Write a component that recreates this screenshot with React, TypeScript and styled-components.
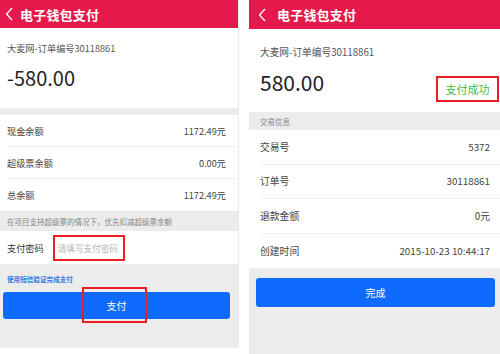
import React from "react";
import styled, { createGlobalStyle } from "styled-components";

const GlobalStyle = createGlobalStyle`
  html, body {
    margin: 0;
    padding: 0;
    background: #fff;
  }
  body {
    font-family: "Noto Sans CJK SC", "Noto Sans", sans-serif;
    color: #333;
  }
`;

const Page = styled.div`
  display: flex;
  gap: 10px;
  width: 500px;
  height: 354px;
  overflow: hidden;
`;

const Screen = styled.div<{ $width: number; $height: number }>`
  flex: none;
  display: flex;
  flex-direction: column;
  width: ${(p) => p.$width}px;
  height: ${(p) => p.$height}px;
  background: #ececec;
  box-sizing: border-box;
  border-right: 1px solid #e6ebf2;
`;

const Header = styled.div<{ $h: number; $pad: number }>`
  display: flex;
  align-items: center;
  gap: ${(p) => p.$pad + 2}px;
  height: ${(p) => p.$h}px;
  padding-left: ${(p) => p.$pad}px;
  background: #e5194b;
  color: #fff;
  flex: none;
`;

const Title = styled.span`
  font-size: 13px;
  font-weight: 700;
  letter-spacing: 0.2px;
`;

const Summary = styled.div<{ $top: number; $bottom: number; $pad: number }>`
  display: flex;
  flex-direction: column;
  padding: ${(p) => p.$top}px 1px ${(p) => p.$bottom}px ${(p) => p.$pad}px;
  background: #fff;
`;

const OrderNo = styled.div<{ $size: number }>`
  font-size: ${(p) => p.$size}px;
  line-height: 14px;
  color: #555;
`;

const AmountRow = styled.div<{ $gap: number }>`
  display: flex;
  align-items: flex-start;
  justify-content: space-between;
  margin-top: ${(p) => p.$gap}px;
`;

const Amount = styled.div<{ $size: number }>`
  font-size: ${(p) => p.$size}px;
  line-height: 26px;
  color: #222;
`;

const StatusBox = styled.div`
  display: flex;
  align-items: center;
  justify-content: center;
  margin-top: 7px;
  width: 63px;
  height: 26px;
  box-sizing: border-box;
  border: 2px solid #ee1c25;
  color: #3cba4c;
  font-size: 11px;
`;

const Band = styled.div<{ $h: number; $pad?: number }>`
  display: flex;
  align-items: center;
  height: ${(p) => p.$h}px;
  padding-left: ${(p) => p.$pad ?? 0}px;
  background: #ececec;
  color: #888;
  font-size: 7.5px;
  flex: none;
`;

const List = styled.div`
  background: #fff;
`;

const Row = styled.div<{ $h: number; $pad: number; $right: number; $size: number; $line?: boolean }>`
  position: relative;
  display: flex;
  align-items: center;
  justify-content: space-between;
  height: ${(p) => p.$h}px;
  padding: 0 ${(p) => p.$right}px 0 ${(p) => p.$pad}px;
  font-size: ${(p) => p.$size}px;
  color: #444;
  box-sizing: border-box;
  border-bottom: ${(p) => (p.$line ? "1px solid #f0f0f0" : "none")};
  margin-left: ${(p) => (p.$line ? p.$pad : 0)}px;
  padding-left: ${(p) => (p.$line ? 0 : p.$pad)}px;
`;

const PasswordRow = styled.div`
  display: flex;
  align-items: center;
  gap: 9px;
  height: 33px;
  padding-left: 7px;
  background: #fff;
  font-size: 9.2px;
  color: #333;
`;

const PasswordInput = styled.div`
  display: flex;
  align-items: center;
  width: 72px;
  height: 26px;
  padding-left: 3px;
  box-sizing: border-box;
  border: 2px solid #ee1c25;
  color: #b5b5b5;
  font-size: 8.6px;
`;

const Footer = styled.div<{ $top: number; $left: number; $right: number }>`
  display: flex;
  flex-direction: column;
  padding: ${(p) => p.$top}px ${(p) => p.$right}px 0 ${(p) => p.$left}px;
`;

const SmsLink = styled.div`
  margin-left: 4px;
  font-size: 6.6px;
  line-height: 10px;
  font-weight: 700;
  color: #2c7be5;
`;

const Button = styled.div<{ $h: number; $top: number }>`
  position: relative;
  display: flex;
  align-items: center;
  justify-content: center;
  height: ${(p) => p.$h}px;
  margin-top: ${(p) => p.$top}px;
  border-radius: 3px;
  background: #0f6bfe;
  color: #fff;
  font-size: 10px;
`;

const Highlight = styled.div`
  position: absolute;
  left: 79px;
  top: -5px;
  width: 65px;
  height: 36px;
  box-sizing: border-box;
  border: 2px solid #ee1c25;
`;

function Back() {
  return (
    <svg width="8" height="14" viewBox="0 0 8 14">
      <polyline points="7,1 1.5,7 7,13" fill="none" stroke="#fff" strokeWidth="1.3" />
    </svg>
  );
}

const balances = [
  ["现金余额", "1172.49元"],
  ["超级票余额", "0.00元"],
  ["总余额", "1172.49元"],
];

const trade = [
  ["交易号", "5372"],
  ["订单号", "30118861"],
  ["退款金额", "0元"],
  ["创建时间", "2015-10-23 10:44:17"],
];

export default function App() {
  return (
    <Page>
      <GlobalStyle />
      <Screen $width={239} $height={348}>
        <Header $h={28} $pad={5}>
          <Back />
          <Title>电子钱包支付</Title>
        </Header>
        <Summary $top={13} $bottom={17} $pad={7}>
          <OrderNo $size={9.2}>大麦网-订单编号30118861</OrderNo>
          <AmountRow $gap={10}>
            <Amount $size={20}>-580.00</Amount>
          </AmountRow>
        </Summary>
        <Band $h={7} />
        <List>
          {balances.map(([k, v], i) => (
            <Row key={k} $h={32} $pad={7} $right={12} $size={9.2} $line={i < 2}>
              <span>{k}</span>
              <span>{v}</span>
            </Row>
          ))}
        </List>
        <Band $h={20} $pad={7}>在项目支持超级票的情况下，优先扣减超级票余额</Band>
        <PasswordRow>
          <span>支付密码</span>
          <PasswordInput>请填写支付密码</PasswordInput>
        </PasswordRow>
        <Footer $top={10} $left={3} $right={8}>
          <SmsLink>使用短信验证完成支付</SmsLink>
          <Button $h={27} $top={8}>
            支付
            <Highlight />
          </Button>
        </Footer>
      </Screen>

      <Screen $width={252} $height={354}>
        <Header $h={29} $pad={9}>
          <Back />
          <Title>电子钱包支付</Title>
        </Header>
        <Summary $top={16} $bottom={10} $pad={11}>
          <OrderNo $size={9.7}>大麦网-订单编号30118861</OrderNo>
          <AmountRow $gap={10}>
            <Amount $size={21}>580.00</Amount>
            <StatusBox>支付成功</StatusBox>
          </AmountRow>
        </Summary>
        <Band $h={18} $pad={11}>交易信息</Band>
        <List>
          {trade.map(([k, v], i) => (
            <Row key={k} $h={34.5} $pad={11} $right={10} $size={9.8} $line={i < 3}>
              <span>{k}</span>
              <span>{v}</span>
            </Row>
          ))}
        </List>
        <Footer $top={10} $left={7} $right={5}>
          <Button $h={29} $top={0}>
            完成
          </Button>
        </Footer>
      </Screen>
    </Page>
  );
}
